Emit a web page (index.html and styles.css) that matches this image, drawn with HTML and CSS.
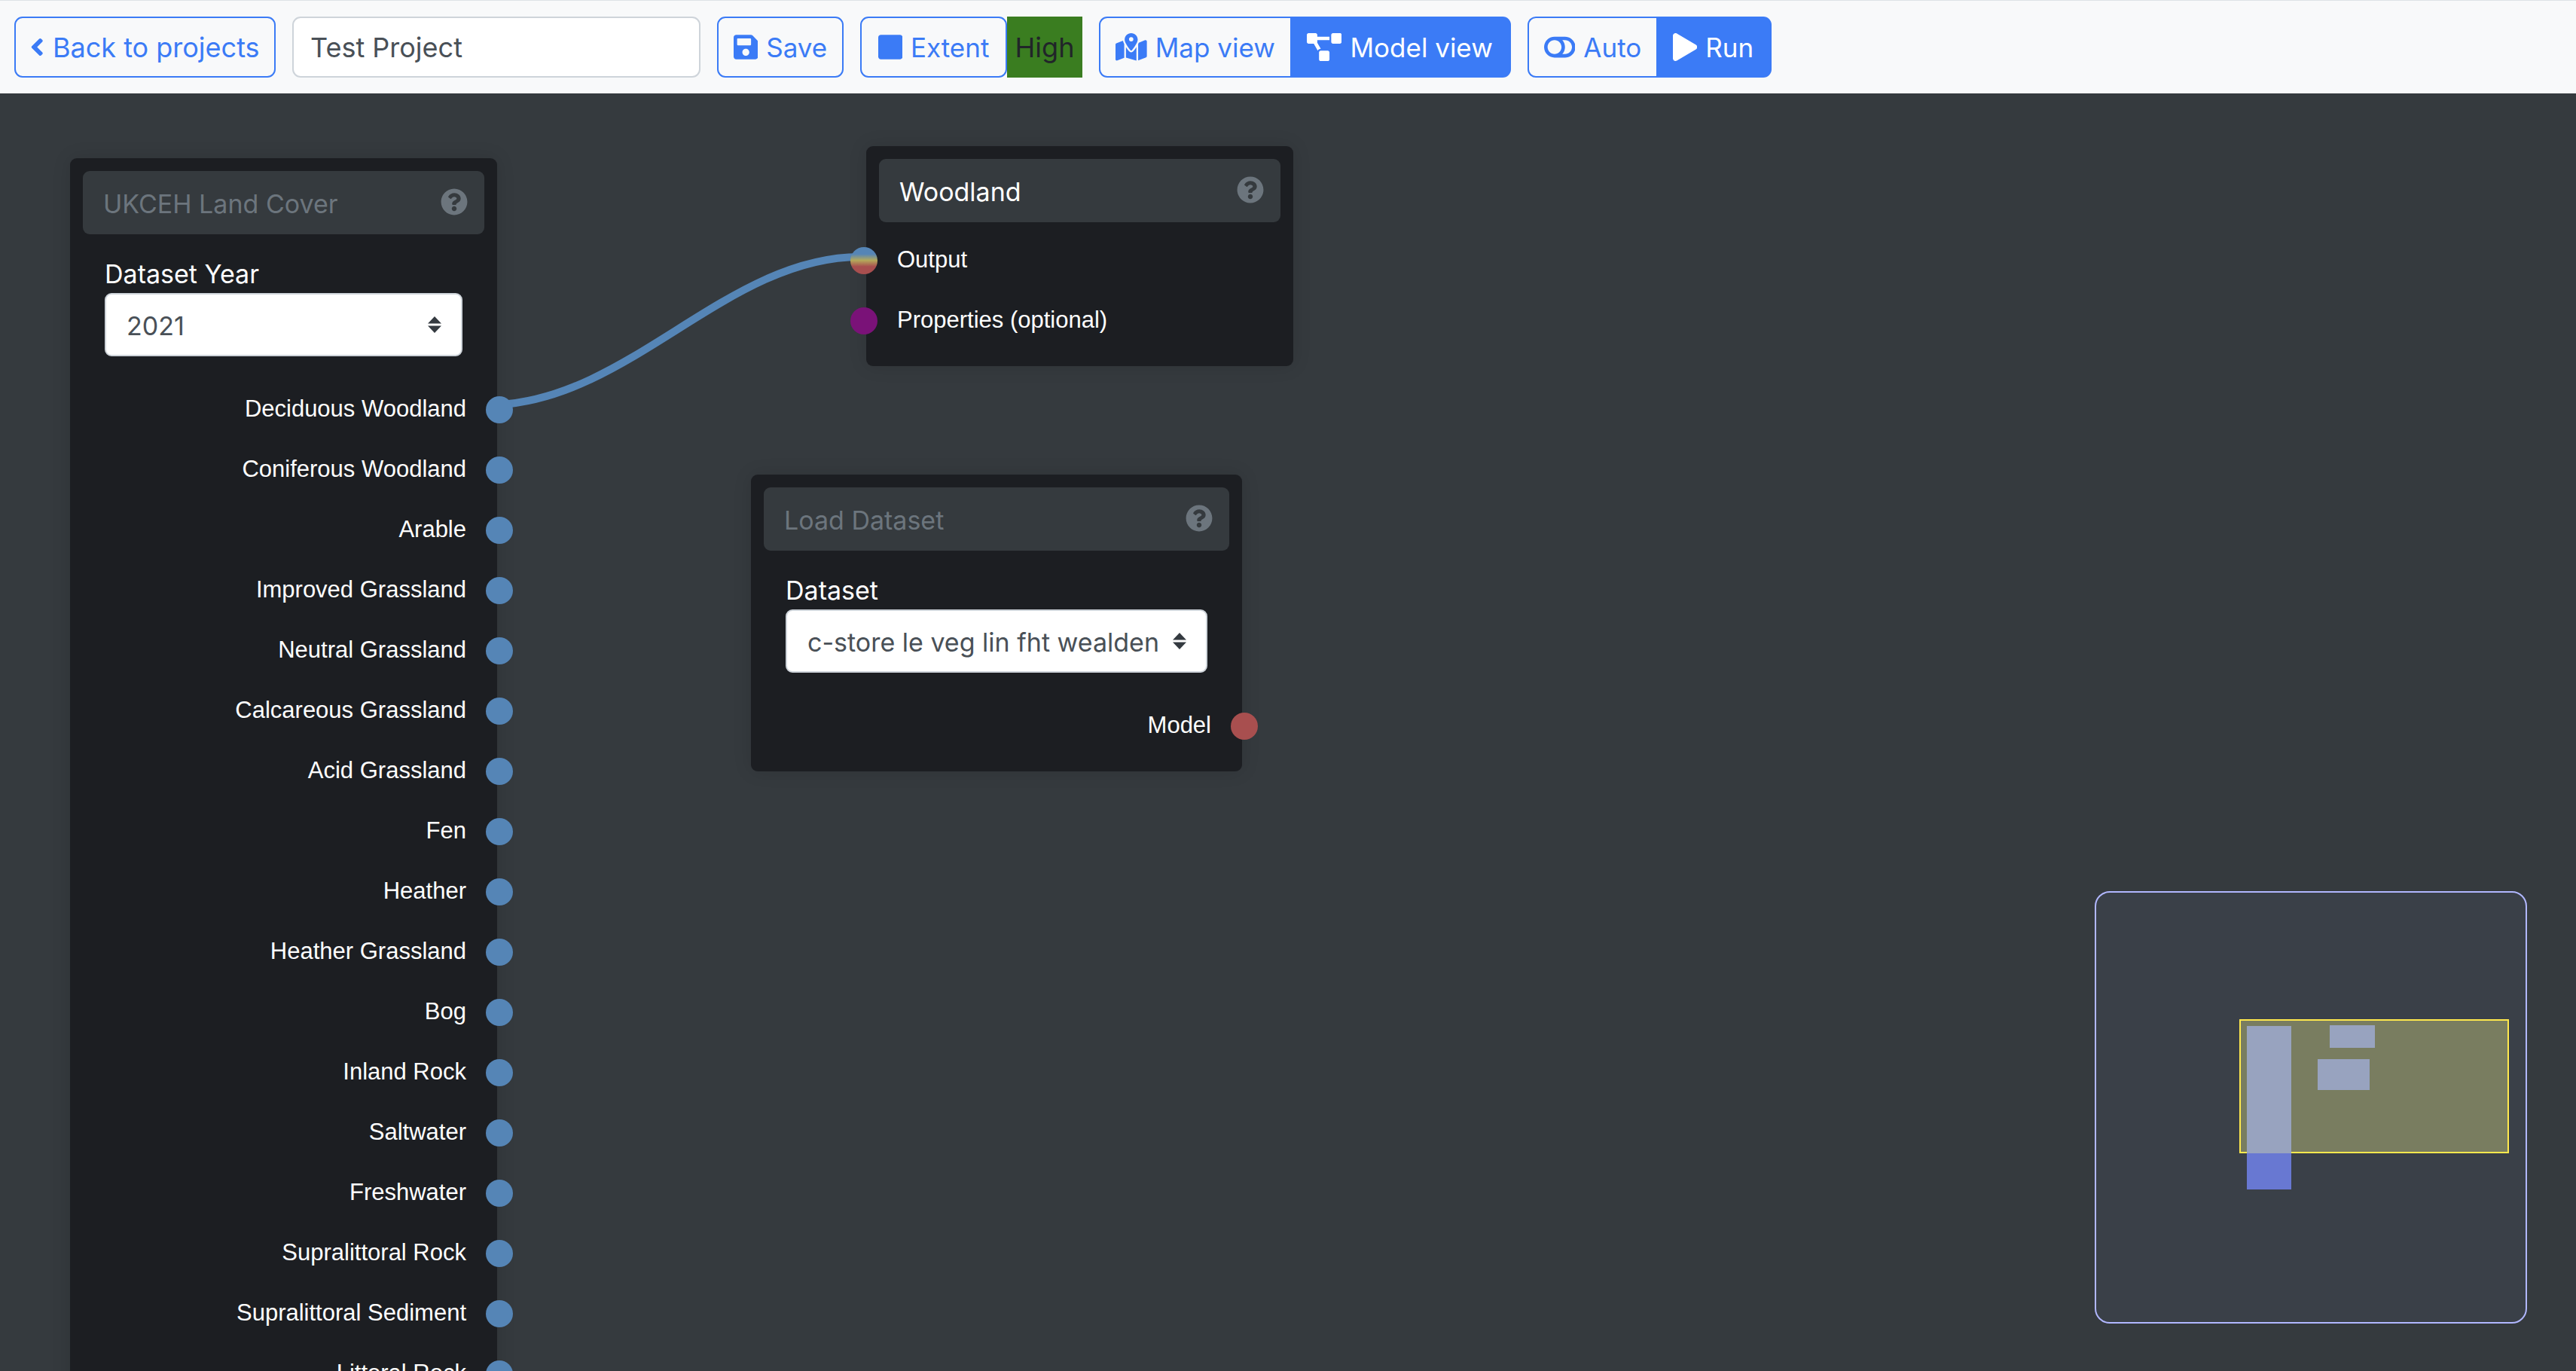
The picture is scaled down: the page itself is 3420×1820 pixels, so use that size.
FILE: index.html
```html
<!DOCTYPE html>
<html lang="en">
<head>
  <meta charset="UTF-8" />
  <title>Test Project</title>
  <link rel="stylesheet" href="styles.css">
</head>
<body>
  <!-- Toolbar -->
  <nav class="toolbar">
    <button class="btn back-btn">
      <svg class="icon" viewBox="0 0 256 512"><path d="M31.700 239l136-136c9.400-9.400 24.600-9.400 33.900 0l22.600 22.600c9.400 9.400 9.400 24.600 0 33.900L127.900 256l96.400 96.400c9.400 9.400 9.400 24.600 0 33.900L201.700 409c-9.400 9.400-24.600 9.400-33.900 0l-136-136c-9.500-9.400-9.500-24.600-.1-34z"/></svg>
      Back to projects
    </button>
    <input class="project-name" type="text" value="Test Project">
    <button class="btn save-btn">
      <svg class="icon" viewBox="0 0 448 512"><path d="M433.941 129.941l-83.882-83.882A48 48 0 0 0 316.118 32H48C21.490 32 0 53.490 0 80v352c0 26.510 21.490 48 48 48h352c26.510 0 48-21.490 48-48V163.882a48 48 0 0 0-14.059-33.941zM224 416c-35.346 0-64-28.654-64-64 0-35.346 28.654-64 64-64s64 28.654 64 64c0 35.346-28.654 64-64 64zm96-304.520V212c0 6.627-5.373 12-12 12H76c-6.627 0-12-5.373-12-12V108c0-6.627 5.373-12 12-12h228.520c3.183 0 6.235 1.264 8.485 3.515l3.480 3.480A11.996 11.996 0 0 1 320 111.480z"/></svg>
      Save
    </button>
    <div class="extent-group">
      <button class="btn extent-btn">
        <svg class="icon" viewBox="0 0 448 512"><path d="M400 32H48C21.500 32 0 53.500 0 80v352c0 26.500 21.500 48 48 48h352c26.500 0 48-21.500 48-48V80c0-26.500-21.500-48-48-48z"/></svg>
        Extent
      </button>
      <div class="quality-badge">High</div>
    </div>
    <div class="btn-group">
      <button class="btn map-btn">
        <svg class="icon" viewBox="0 0 576 512"><path d="M408 120c0 54.600-73.100 151.900-105.200 192c-7.700 9.600-22 9.600-29.600 0C241.100 271.900 168 174.600 168 120C168 53.700 221.700 0 288 0s120 53.700 120 120zm8 80.400c3.500-6.900 6.700-13.800 9.600-20.600c.5-1.200 1-2.500 1.500-3.700l116-46.400C558.900 123.400 576 135 576 152V422.800c0 9.800-6 18.600-15.100 22.300L416 503V200.400zM137.600 138.300c2.400 14.100 7.200 28.300 12.800 41.500c2.900 6.800 6.100 13.700 9.600 20.600V451.800L32.900 502.700C17.100 509 0 497.400 0 480.400V209.600c0-9.800 6-18.600 15.100-22.300l122.600-49zM327.800 332c13.900-17.400 35.700-45.700 56.200-77V504.300L192 449.400V255c20.500 31.300 42.300 59.600 56.200 77c20.500 25.600 59.100 25.600 79.600 0zM288 152a40 40 0 1 0 0-80 40 40 0 1 0 0 80z"/></svg>
        Map view
      </button>
      <button class="btn btn-active model-btn">
        <svg class="icon" viewBox="0 0 640 512"><path d="M384 320H256c-17.670 0-32 14.330-32 32v128c0 17.670 14.330 32 32 32h128c17.670 0 32-14.330 32-32V352c0-17.670-14.330-32-32-32zM192 32c0-17.670-14.330-32-32-32H32C14.330 0 0 14.330 0 32v128c0 17.670 14.330 32 32 32h95.720l73.160 128.040C211.980 300.980 232.400 288 256 288h.28L192 175.510V128h224V64H192V32zM608 0H480c-17.670 0-32 14.330-32 32v128c0 17.670 14.330 32 32 32h128c17.670 0 32-14.330 32-32V32c0-17.670-14.330-32-32-32z"/></svg>
        Model view
      </button>
    </div>
    <div class="btn-group">
      <button class="btn auto-btn">
        <svg class="icon" viewBox="0 0 576 512"><path d="M384 64H192C85.961 64 0 149.961 0 256s85.961 192 192 192h192c106.039 0 192-85.961 192-192S490.039 64 384 64zM64 256c0-70.741 57.249-128 128-128 70.741 0 128 57.249 128 128 0 70.741-57.249 128-128 128-70.741 0-128-57.249-128-128zm320 128h-48.905c65.217-72.858 65.236-183.120 0-256H384c70.741 0 128 57.249 128 128 0 70.740-57.249 128-128 128z"/></svg>
        Auto
      </button>
      <button class="btn btn-active run-btn">
        <svg class="icon" viewBox="0 0 448 512"><path d="M424.400 214.700L72.400 6.600C43.800-10.300 0 6.100 0 47.900V464c0 37.500 40.700 60.100 72.400 41.300l352-208c31.400-18.500 31.500-64.100 0-82.600z"/></svg>
        Run
      </button>
    </div>
  </nav>

  <!-- Model canvas -->
  <main class="canvas">
    <svg class="wires" width="3420" height="1696">
      <path d="M663 413 C840 403 970 213 1147 217" fill="none" stroke="#5585b6" stroke-width="10"/>
    </svg>

    <section class="node node-landcover">
      <header class="node-title dim">
        <span>UKCEH Land Cover</span>
        <svg class="help" viewBox="0 0 512 512"><path d="M504 256c0 136.997-111.043 248-248 248S8 392.997 8 256C8 119.083 119.043 8 256 8s248 111.083 248 248zM262.655 90c-54.497 0-89.255 22.957-116.549 63.758-3.536 5.286-2.353 12.415 2.715 16.258l34.699 26.310c5.205 3.947 12.621 3.008 16.665-2.122 17.864-22.658 30.113-35.797 57.303-35.797 20.429 0 45.698 13.148 45.698 32.958 0 14.976-12.363 22.667-32.534 33.976C247.128 238.528 216 254.941 216 296v4c0 6.627 5.373 12 12 12h56c6.627 0 12-5.373 12-12v-1.333c0-28.462 83.186-29.647 83.186-106.667 0-58.002-60.165-102-116.531-102zM256 338c-25.365 0-46 20.635-46 46 0 25.364 20.635 46 46 46s46-20.636 46-46c0-25.365-20.635-46-46-46z"/></svg>
      </header>
      <div class="field">
        <label>Dataset Year</label>
        <div class="select-wrap">
          <select><option>2021</option></select>
          <svg class="select-arrows" viewBox="0 0 18 22"><path d="M9 0l9 9.500H0zM9 22L0 12.500h18z"/></svg>
        </div>
      </div>
      <div class="outputs">
        <div class="socket-row out"><span>Deciduous Woodland</span><i class="socket"></i></div>
        <div class="socket-row out"><span>Coniferous Woodland</span><i class="socket"></i></div>
        <div class="socket-row out"><span>Arable</span><i class="socket"></i></div>
        <div class="socket-row out"><span>Improved Grassland</span><i class="socket"></i></div>
        <div class="socket-row out"><span>Neutral Grassland</span><i class="socket"></i></div>
        <div class="socket-row out"><span>Calcareous Grassland</span><i class="socket"></i></div>
        <div class="socket-row out"><span>Acid Grassland</span><i class="socket"></i></div>
        <div class="socket-row out"><span>Fen</span><i class="socket"></i></div>
        <div class="socket-row out"><span>Heather</span><i class="socket"></i></div>
        <div class="socket-row out"><span>Heather Grassland</span><i class="socket"></i></div>
        <div class="socket-row out"><span>Bog</span><i class="socket"></i></div>
        <div class="socket-row out"><span>Inland Rock</span><i class="socket"></i></div>
        <div class="socket-row out"><span>Saltwater</span><i class="socket"></i></div>
        <div class="socket-row out"><span>Freshwater</span><i class="socket"></i></div>
        <div class="socket-row out"><span>Supralittoral Rock</span><i class="socket"></i></div>
        <div class="socket-row out"><span>Supralittoral Sediment</span><i class="socket"></i></div>
        <div class="socket-row out"><span>Littoral Rock</span><i class="socket"></i></div>
      </div>
    </section>

    <section class="node node-woodland">
      <header class="node-title">
        <span>Woodland</span>
        <svg class="help" viewBox="0 0 512 512"><path d="M504 256c0 136.997-111.043 248-248 248S8 392.997 8 256C8 119.083 119.043 8 256 8s248 111.083 248 248zM262.655 90c-54.497 0-89.255 22.957-116.549 63.758-3.536 5.286-2.353 12.415 2.715 16.258l34.699 26.310c5.205 3.947 12.621 3.008 16.665-2.122 17.864-22.658 30.113-35.797 57.303-35.797 20.429 0 45.698 13.148 45.698 32.958 0 14.976-12.363 22.667-32.534 33.976C247.128 238.528 216 254.941 216 296v4c0 6.627 5.373 12 12 12h56c6.627 0 12-5.373 12-12v-1.333c0-28.462 83.186-29.647 83.186-106.667 0-58.002-60.165-102-116.531-102zM256 338c-25.365 0-46 20.635-46 46 0 25.364 20.635 46 46 46s46-20.636 46-46c0-25.365-20.635-46-46-46z"/></svg>
      </header>
      <div class="inputs">
        <div class="socket-row in"><i class="socket socket-mixed"></i><span>Output</span></div>
        <div class="socket-row in"><i class="socket socket-props"></i><span>Properties (optional)</span></div>
      </div>
    </section>

    <section class="node node-load">
      <header class="node-title dim">
        <span>Load Dataset</span>
        <svg class="help" viewBox="0 0 512 512"><path d="M504 256c0 136.997-111.043 248-248 248S8 392.997 8 256C8 119.083 119.043 8 256 8s248 111.083 248 248zM262.655 90c-54.497 0-89.255 22.957-116.549 63.758-3.536 5.286-2.353 12.415 2.715 16.258l34.699 26.310c5.205 3.947 12.621 3.008 16.665-2.122 17.864-22.658 30.113-35.797 57.303-35.797 20.429 0 45.698 13.148 45.698 32.958 0 14.976-12.363 22.667-32.534 33.976C247.128 238.528 216 254.941 216 296v4c0 6.627 5.373 12 12 12h56c6.627 0 12-5.373 12-12v-1.333c0-28.462 83.186-29.647 83.186-106.667 0-58.002-60.165-102-116.531-102zM256 338c-25.365 0-46 20.635-46 46 0 25.364 20.635 46 46 46s46-20.636 46-46c0-25.365-20.635-46-46-46z"/></svg>
      </header>
      <div class="field">
        <label>Dataset</label>
        <div class="select-wrap">
          <select><option>c-store le veg lin fht wealden</option></select>
          <svg class="select-arrows" viewBox="0 0 18 22"><path d="M9 0l9 9.500H0zM9 22L0 12.500h18z"/></svg>
        </div>
      </div>
      <div class="outputs">
        <div class="socket-row out"><span>Model</span><i class="socket socket-model"></i></div>
      </div>
    </section>

    <!-- Minimap -->
    <aside class="minimap">
      <div class="mini-viewport"></div>
      <div class="mini-node mini-a"></div>
      <div class="mini-node mini-b"></div>
      <div class="mini-node mini-c"></div>
    </aside>
  </main>
</body>
</html>
```

FILE: styles.css
```css
:root {
  --primary: #3b7bf6;
  --canvas-bg: #353a3e;
  --node-bg: #1c1e22;
  --socket-blue: #5585b6;
}

* {
  box-sizing: border-box;
}

body {
  margin: 0;
  height: 100vh;
  display: flex;
  flex-direction: column;
  overflow: hidden;
  font-family: 'Inter', sans-serif;
  font-size: 34px;
  background: var(--canvas-bg);
}

/* Toolbar */
.toolbar {
  flex: none;
  height: 124px;
  display: flex;
  align-items: flex-start;
  gap: 22px;
  padding: 21px 19px 0;
  font-size: 35px;
  background: #f8f9fa;
  border-top: 1px solid #dee2e6;
}

.btn {
  height: 81px;
  display: inline-flex;
  align-items: center;
  justify-content: center;
  gap: 11px;
  padding: 0;
  font-family: inherit;
  font-size: 35px;
  color: var(--primary);
  background: transparent;
  border: 2px solid var(--primary);
  border-radius: 11px;
}

.icon {
  height: 37px;
  fill: currentColor;
  flex: none;
}

.back-btn {
  width: 347px;
  font-size: 36px;
}

.save-btn { width: 168px; }

.project-name {
  width: 542px;
  height: 81px;
  padding: 0 22px;
  font-family: inherit;
  font-size: 36px;
  color: #495057;
  background: #fff;
  border: 2px solid #ced4da;
  border-radius: 11px;
}

.extent-group {
  display: flex;
}

.extent-btn { width: 195px; }

.quality-badge {
  width: 100px;
  height: 81px;
  display: flex;
  align-items: center;
  justify-content: center;
  font-size: 36px;
  color: #212529;
  background: #3a7d20;
}

.btn-group {
  display: flex;
}

.btn-group .btn:first-child {
  border-right: 0;
  border-radius: 11px 0 0 11px;
}

.btn-group .btn:last-child {
  border-left: 0;
  border-radius: 0 11px 11px 0;
}

.btn-active {
  color: #fff;
  background: var(--primary);
}

.map-btn { width: 254px; }
.model-btn { width: 293px; }
.auto-btn { width: 171px; }
.run-btn { width: 153px; }

/* Canvas */
.canvas {
  flex: 1;
  position: relative;
  overflow: hidden;
}

.wires {
  position: absolute;
  left: 0;
  top: 0;
}

.node {
  position: absolute;
  padding: 17px 0 19px;
  background: var(--node-bg);
  border-radius: 9px;
  box-shadow: 0 0 24px rgba(0, 0, 0, 0.12);
}

.node-landcover { left: 93px; top: 86px; width: 567px; }
.node-woodland { left: 1150px; top: 70px; width: 567px; height: 292px; }
.node-load { left: 997px; top: 506px; width: 652px; height: 394px; }

.node-title {
  height: 84px;
  margin: 0 17px;
  padding: 2px 22px 0 27px;
  display: flex;
  align-items: center;
  justify-content: space-between;
  color: #fff;
  background: var(--canvas-bg);
  border-radius: 9px;
}

.node-title.dim {
  color: #6c757d;
}

.help {
  width: 36px;
  height: 36px;
  margin-top: -4px;
  fill: #6c757d;
  flex: none;
}

.field {
  margin: 27px 46px 0;
  color: #fff;
}

.field label {
  display: block;
  height: 51px;
  line-height: 51px;
}

.select-wrap {
  position: relative;
}

.select-wrap select {
  display: block;
  width: 100%;
  height: 84px;
  padding: 2px 62px 0 27px;
  appearance: none;
  font-family: inherit;
  font-size: 34px;
  color: #495057;
  background: #fff;
  border: 2px solid #ced4da;
  border-radius: 9px;
}

.select-arrows {
  position: absolute;
  right: 28px;
  top: 31px;
  width: 18px;
  height: 22px;
  fill: #343a40;
}

.outputs {
  margin-top: 31px;
}

.inputs {
  margin-top: 11px;
}

.socket-row {
  height: 80px;
  display: flex;
  align-items: center;
  gap: 26px;
  font-family: 'Liberation Sans', sans-serif;
  font-size: 31px;
  color: #fff;
}

.socket-row span {
  margin-top: -3px;
}

.socket-row.out {
  justify-content: flex-end;
}

.socket {
  width: 36px;
  height: 36px;
  flex: none;
  border-radius: 50%;
  background: var(--socket-blue);
}

.out .socket { margin-right: -21px; }
.in .socket { margin-left: -21px; }

.socket-mixed {
  background: linear-gradient(180deg, #5585b6 26%, #b5a95a 49%, #a84f4f 72%);
}

.socket-props { background: #7a1278; }
.socket-model { background: #a84f4f; }

/* Minimap */
.minimap {
  position: absolute;
  right: 65px;
  bottom: 63px;
  width: 574px;
  height: 574px;
  background: #3a4048;
  border: 2px solid #b1b7ff;
  border-radius: 20px;
}

.mini-viewport {
  position: absolute;
  left: 190px;
  top: 168px;
  width: 358px;
  height: 178px;
  background: #797d60;
  border: 2px solid #ffe94d;
}

.mini-node {
  position: absolute;
  background: #98a3bf;
}

.mini-a {
  left: 200px;
  top: 177px;
  width: 59px;
  height: 217px;
  background: linear-gradient(180deg, #98a3bf 169px, #6878d2 169px);
}

.mini-b { left: 310px; top: 176px; width: 60px; height: 30px; }
.mini-c { left: 294px; top: 221px; width: 69px; height: 41px; }
```
